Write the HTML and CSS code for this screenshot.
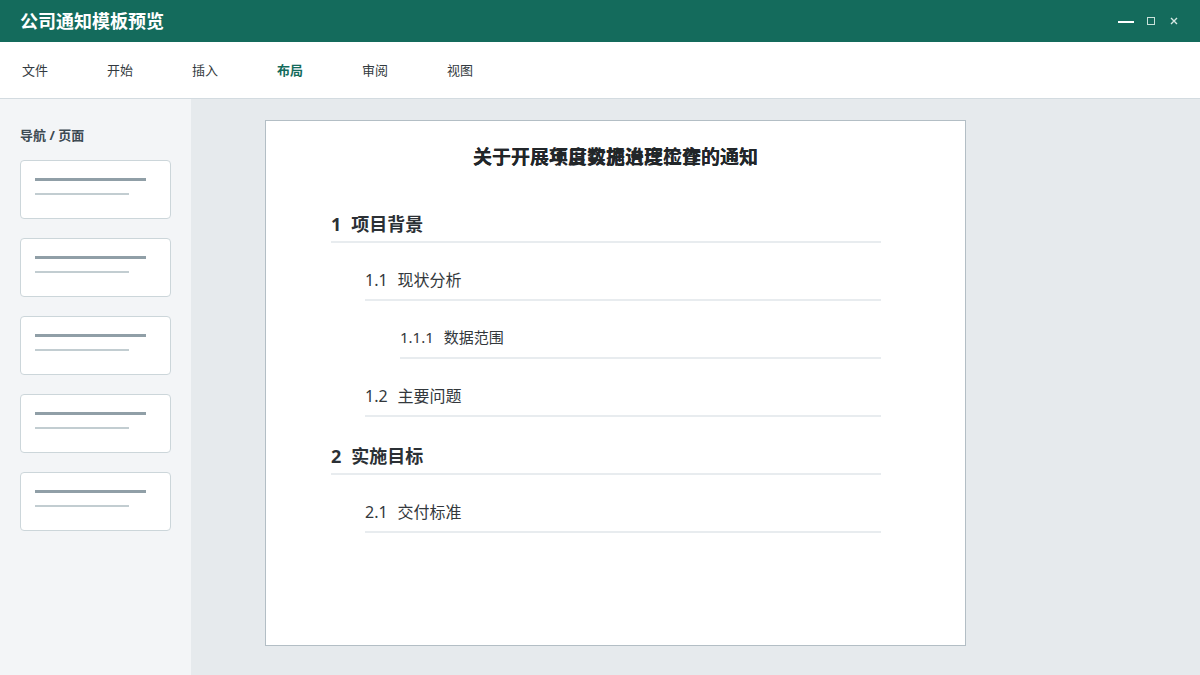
FILE: index.html
```html
<!DOCTYPE html>
<html lang="zh">
<head>
<meta charset="utf-8">
<title>公司通知模板预览</title>
<link rel="stylesheet" href="styles.css">
</head>
<body>
<div class="app">
  <header class="titlebar">
    <div class="app-title">公司通知模板预览</div>
    <div class="win-controls">
      <span class="ctl ctl-min"></span>
      <span class="ctl ctl-max"></span>
      <svg class="ctl ctl-close" width="8" height="8" viewBox="0 0 8 8"><path d="M1 1L7 7M7 1L1 7" stroke="#d6e8e3" stroke-width="1.4" fill="none"/></svg>
    </div>
  </header>
  <nav class="menubar">
    <span class="menu-item">文件</span>
    <span class="menu-item">开始</span>
    <span class="menu-item">插入</span>
    <span class="menu-item active">布局</span>
    <span class="menu-item">审阅</span>
    <span class="menu-item">视图</span>
  </nav>
  <div class="workspace">
    <aside class="sidebar">
      <div class="side-label">导航 / 页面</div>
      <div class="thumb"><span class="t-line1"></span><span class="t-line2"></span></div>
      <div class="thumb"><span class="t-line1"></span><span class="t-line2"></span></div>
      <div class="thumb"><span class="t-line1"></span><span class="t-line2"></span></div>
      <div class="thumb"><span class="t-line1"></span><span class="t-line2"></span></div>
      <div class="thumb"><span class="t-line1"></span><span class="t-line2"></span></div>
    </aside>
    <main class="canvas">
      <section class="page">
        <div class="doc-title">
          <span class="title-a">关于开展项目实施进度检查的通知</span>
          <span class="title-b">关于开展年度数据治理工作的通知</span>
        </div>
        <div class="row lvl1"><span class="num">1</span>项目背景</div>
        <div class="row lvl2"><span class="num">1.1</span>现状分析</div>
        <div class="row lvl3"><span class="num">1.1.1</span>数据范围</div>
        <div class="row lvl2"><span class="num">1.2</span>主要问题</div>
        <div class="row lvl1"><span class="num">2</span>实施目标</div>
        <div class="row lvl2"><span class="num">2.1</span>交付标准</div>
      </section>
    </main>
  </div>
</div>
</body>
</html>
```
FILE: styles.css
```css
* { box-sizing: border-box; }
html, body { margin: 0; padding: 0; }
body {
  font-family: "Noto Sans", "Noto Sans CJK SC", sans-serif;
  width: 1200px;
  height: 675px;
  overflow: hidden;
  background: #ffffff;
}
.app {
  display: flex;
  flex-direction: column;
  height: 675px;
}
.titlebar {
  height: 42px;
  flex: none;
  background: #146b5c;
  display: flex;
  align-items: center;
  justify-content: space-between;
  padding: 0 22px 0 20px;
}
.app-title {
  color: #ffffff;
  font-size: 18px;
  font-weight: 700;
  line-height: 24px;
}
.win-controls {
  display: flex;
  align-items: center;
}
.ctl { display: block; }
.ctl-min {
  width: 16px;
  height: 2px;
  background: #ffffff;
  margin-top: 1px;
  margin-right: 13px;
}
.ctl-max {
  width: 8px;
  height: 8px;
  border: 1px solid #c9e1da;
  margin-right: 15px;
}
.ctl-close { width: 8px; height: 8px; }
.menubar {
  height: 57px;
  flex: none;
  background: #ffffff;
  border-bottom: 1px solid #d3dbe0;
  display: flex;
  align-items: center;
  padding-left: 22px;
}
.menu-item {
  width: 85px;
  font-size: 13px;
  color: #333a40;
  line-height: 18px;
}
.menu-item.active {
  color: #146b5c;
  font-weight: 700;
}
.workspace {
  flex: 1;
  display: flex;
  min-height: 0;
}
.sidebar {
  width: 191px;
  flex: none;
  background: #f3f5f7;
  padding: 27px 20px 0 20px;
}
.side-label {
  font-size: 13px;
  font-weight: 700;
  color: #3d4a52;
  line-height: 18px;
  margin-bottom: 16px;
}
.thumb {
  width: 151px;
  height: 59px;
  background: #ffffff;
  border: 1px solid #ccd6da;
  border-radius: 4px;
  padding: 17px 0 0 14px;
  margin-bottom: 19px;
  display: flex;
  flex-direction: column;
}
.t-line1 {
  display: block;
  width: 111px;
  height: 3px;
  background: #909fa7;
}
.t-line2 {
  display: block;
  width: 94px;
  height: 2px;
  margin-top: 12px;
  background: #c2cdd1;
}
.canvas {
  flex: 1;
  background: #e6eaed;
  padding: 21px 0 0 74px;
}
.page {
  width: 701px;
  height: 526px;
  background: #ffffff;
  border: 1px solid #b3bec5;
  padding: 22px 84px 0 65px;
}
.doc-title {
  position: relative;
  height: 28px;
  margin: 0 -84px 14px -65px;
  text-align: center;
  font-size: 19px;
  font-weight: 700;
  line-height: 28px;
  color: #222629;
  white-space: nowrap;
}
.title-a { display: inline-block; }
.title-b {
  position: absolute;
  left: 0;
  right: 0;
  top: 0;
  text-align: center;
}
.row {
  height: 58px;
  border-bottom: 2px solid #e8ecef;
  white-space: nowrap;
  line-height: 24px;
}
.row .num { margin-right: 10px; }
.lvl1 {
  font-size: 18px;
  font-weight: 700;
  color: #2b3035;
  padding-top: 27px;
}
.lvl2 {
  font-size: 16px;
  color: #33383c;
  padding-top: 25px;
  margin-left: 34px;
}
.lvl3 {
  font-size: 15px;
  color: #33383c;
  padding-top: 24px;
  margin-left: 69px;
}
```
